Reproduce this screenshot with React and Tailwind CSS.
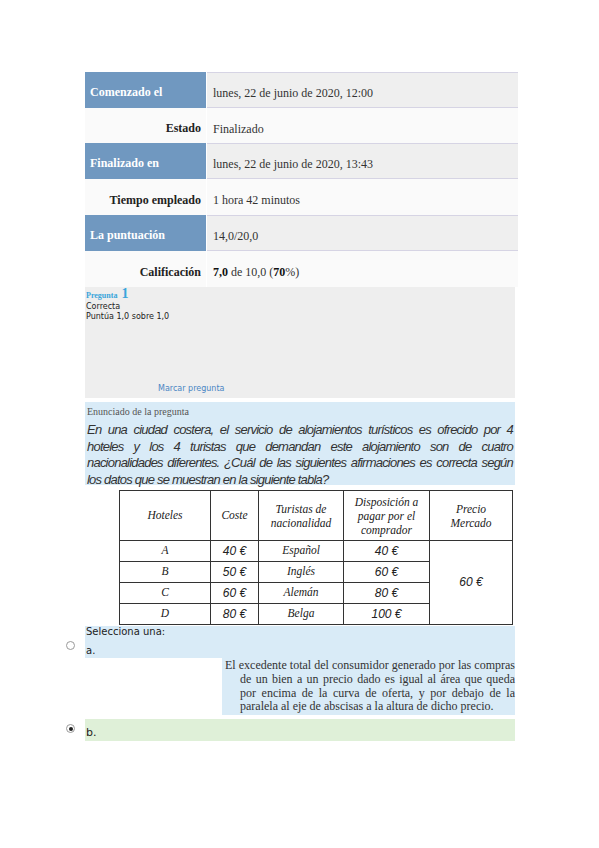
import React from "react";

const serif = { fontFamily: '"Liberation Serif", "Times New Roman", serif' };
const sans = { fontFamily: '"DejaVu Sans", "Liberation Sans", sans-serif' };
const arial = { fontFamily: '"Liberation Sans", Arial, sans-serif' };

const summary = [
  { label: "Comenzado el", value: "lunes, 22 de junio de 2020, 12:00", blue: true, h: "h-[36px]" },
  { label: "Estado", value: "Finalizado", h: "h-[35px]" },
  { label: "Finalizado en", value: "lunes, 22 de junio de 2020, 13:43", blue: true, h: "h-[36px]" },
  { label: "Tiempo empleado", value: "1 hora 42 minutos", h: "h-[36px]" },
  { label: "La puntuación", value: "14,0/20,0", blue: true, h: "h-[36px]" },
  { label: "Calificación", value: null, h: "h-[36px]" },
];

const stem = [
  "En una ciudad costera, el servicio de alojamientos turísticos es ofrecido por 4",
  "hoteles y los 4 turistas que demandan este alojamiento son de cuatro",
  "nacionalidades diferentes. ¿Cuál de las siguientes afirmaciones es correcta según",
  "los datos que se muestran en la siguiente tabla?",
];

const optionA = [
  "El excedente total del consumidor generado por las compras",
  "de un bien a un precio dado es igual al área que queda",
  "por encima de la curva de oferta, y por debajo de la",
  "paralela al eje de abscisas a la altura de dicho precio.",
];

const rows = [
  ["A", "40 €", "Español", "40 €"],
  ["B", "50 €", "Inglés", "60 €"],
  ["C", "60 €", "Alemán", "80 €"],
  ["D", "80 €", "Belga", "100 €"],
];

const Radio = ({ checked }) => (
  <span className="w-[9px] h-[9px] rounded-full border border-[#9a9a9a] bg-white flex items-center justify-center">
    {checked && <span className="w-[4px] h-[4px] rounded-full bg-[#222]" />}
  </span>
);

export default function App() {
  return (
    <div className="min-h-screen bg-white pt-[72px] text-[#333]">
      {/* Resumen del intento */}
      <div className="ml-[85px] w-[433px] text-[12px]" style={serif}>
        {summary.map((r) => (
          <div key={r.label} className={`flex ${r.h}`}>
            {r.blue ? (
              <div className="w-[121px] bg-[#7098c0] text-white font-bold flex items-center pl-[5px] pt-[4px]">
                {r.label}
              </div>
            ) : (
              <div className="w-[121px] bg-[#fafafa] font-bold text-[#222] flex items-center justify-end pr-[5px] pt-[5px]">
                {r.label}
              </div>
            )}
            <div
              className={`flex-1 ml-px flex items-center pl-[6px] pt-[6px] ${
                r.blue ? "bg-[#efefef] border-y border-[#d6d4e4]" : "bg-[#fafafa]"
              }`}
            >
              {r.value ?? (
                <span>
                  <b className="text-[#111]">7,0</b> de 10,0 (<b className="text-[#111]">70</b>%)
                </span>
              )}
            </div>
          </div>
        ))}
      </div>

      {/* Info de la pregunta */}
      <div className="ml-[85px] w-[430px] h-[111px] bg-[#eeeeee] relative pl-px">
        <div className="text-[#3aa5db] font-bold leading-[12px]" style={serif}>
          <span className="text-[8px]">Pregunta</span> <span className="text-[14px]">1</span>
        </div>
        <div className="text-[8px] leading-[10px] text-[#222]" style={sans}>
          Correcta
          <br />
          Puntúa 1,0 sobre 1,0
        </div>
        <div className="absolute left-[73px] bottom-[3px] text-[8px] text-[#4a86c4]" style={sans}>
          Marcar pregunta
        </div>
      </div>

      {/* Enunciado */}
      <div className="ml-[85px] mt-[4px] w-[430px] h-[83px] bg-[#d9ebf7] px-[2px] pt-[3px]">
        <div className="text-[10px] text-[#555] leading-[14px]" style={serif}>
          Enunciado de la pregunta
        </div>
        <div
          className="italic text-[13px] leading-[16.5px] text-[#333] tracking-[-0.06em] mt-[3px]"
          style={arial}
        >
          {stem.map((l, i) => (
            <div
              key={i}
              className={i < stem.length - 1 ? "text-justify [text-align-last:justify]" : ""}
            >
              {l}
            </div>
          ))}
        </div>
      </div>

      {/* Tabla */}
      <div className="ml-[119px] mt-[5px]">
        <table className="border-collapse text-[11.5px] italic text-[#222]" style={serif}>
          <thead>
            <tr className="h-[50px]">
              <th className="w-[91px] border border-[#333] font-normal">Hoteles</th>
              <th className="w-[48px] border border-[#333] font-normal">Coste</th>
              <th className="w-[85px] border border-[#333] font-normal leading-[14px]">
                Turistas de
                <br />
                nacionalidad
              </th>
              <th className="w-[86px] border border-[#333] font-normal leading-[14px]">
                Disposición a
                <br />
                pagar por el
                <br />
                comprador
              </th>
              <th className="w-[83px] border border-[#333] font-normal leading-[14px]">
                Precio
                <br />
                Mercado
              </th>
            </tr>
          </thead>
          <tbody>
            {rows.map((r, i) => (
              <tr key={r[0]} className="h-[21px]">
                <td className="border border-[#333] text-center">{r[0]}</td>
                <td className="border border-[#333] text-center" style={arial}>
                  <span className="text-[12px]">{r[1]}</span>
                </td>
                <td className="border border-[#333] text-center">{r[2]}</td>
                <td className="border border-[#333] text-center" style={arial}>
                  <span className="text-[12px]">{r[3]}</span>
                </td>
                {i === 0 && (
                  <td rowSpan={4} className="border border-[#333] text-center" style={arial}>
                    <span className="text-[12px]">60 €</span>
                  </td>
                )}
              </tr>
            ))}
          </tbody>
        </table>
      </div>

      {/* Respuestas */}
      <div className="mt-px flex ml-[63px]" style={sans}>
        <div className="w-[22px] flex flex-col justify-end">
          <div className="h-[20px] bg-white flex items-start pl-[3px] pt-[3px]">
            <Radio />
          </div>
        </div>
        <div className="w-[430px] h-[32px] bg-[#d9ebf7] text-[10px] text-[#222] flex flex-col justify-between pl-[1px] pb-[1px]">
          <div className="leading-[12px]">Selecciona una:</div>
          <div className="leading-[12px]">a.</div>
        </div>
      </div>
      <div
        className="ml-[222px] w-[293px] bg-[#d9ebf7] text-[12px] leading-[13.8px] text-[#333] pl-[3px] py-[1px]"
        style={serif}
      >
        {optionA.map((l, i) => (
          <div
            key={i}
            className={`${i > 0 ? "pl-[15px]" : ""} ${
              i < optionA.length - 1 ? "text-justify [text-align-last:justify]" : ""
            }`}
          >
            {l}
          </div>
        ))}
      </div>
      <div className="mt-[4px] flex ml-[63px]" style={sans}>
        <div className="w-[22px] h-[22px] bg-white flex items-start pl-[3px] pt-[5px]">
          <Radio checked />
        </div>
        <div className="w-[430px] h-[22px] bg-[#dff0d8] text-[11px] text-[#222] flex items-end pl-[1px]">
          b.
        </div>
      </div>
    </div>
  );
}
